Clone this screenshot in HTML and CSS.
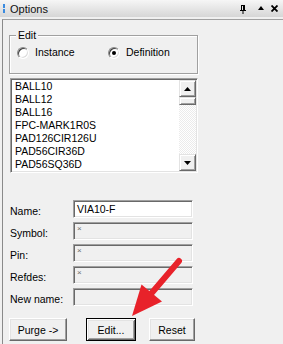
FILE: index.html
```html
<!DOCTYPE html>
<html>
<head>
<meta charset="utf-8">
<link rel="stylesheet" href="styles.css">
</head>
<body>
<div class="window">
  <div class="titlebar">
    <div class="grip"><span></span><span></span></div>
    <div class="title">Options</div>
    <div class="tools">
      <svg class="pin" width="6" height="9" viewBox="0 0 6 9"><path d="M1 0h4v5h1v1H3.5v3h-1V6H0V5h1z M2 1v4h1V1z" fill="#000" fill-rule="evenodd"/></svg>
      <svg class="up" width="6" height="4" viewBox="0 0 6 4"><path d="M3 0L6 4H0z" fill="#000"/></svg>
      <svg class="close" width="7" height="7" viewBox="0 0 7 7"><path d="M0.5 0.5l6 6M6.5 0.5l-6 6" stroke="#000" stroke-width="1.8"/></svg>
    </div>
  </div>
  <div class="panel">
    <div class="group">
      <span class="legend">Edit</span>
      <div class="radios">
        <label class="radio"><span class="rb"></span>Instance</label>
        <label class="radio"><span class="rb on"></span>Definition</label>
      </div>
    </div>
    <div class="listbox">
      <ul class="items">
        <li>BALL10</li>
        <li>BALL12</li>
        <li>BALL16</li>
        <li>FPC-MARK1R0S</li>
        <li>PAD126CIR126U</li>
        <li>PAD56CIR36D</li>
        <li>PAD56SQ36D</li>
      </ul>
      <div class="vscroll">
        <div class="sbtn"><svg width="7" height="4" viewBox="0 0 7 4"><path d="M3.5 0L7 4H0z" fill="#000"/></svg></div>
        <div class="thumb"></div>
        <div class="track"></div>
        <div class="sbtn"><svg width="7" height="4" viewBox="0 0 7 4"><path d="M0 0h7L3.5 4z" fill="#000"/></svg></div>
      </div>
    </div>
    <div class="form">
      <div class="row"><span class="lbl">Name:</span><div class="field">VIA10-F</div></div>
      <div class="row"><span class="lbl">Symbol:</span><div class="field dis"><span class="ast">×</span></div></div>
      <div class="row"><span class="lbl">Pin:</span><div class="field dis"><span class="ast">×</span></div></div>
      <div class="row"><span class="lbl">Refdes:</span><div class="field dis"><span class="ast">×</span></div></div>
      <div class="row"><span class="lbl">New name:</span><div class="field dis"></div></div>
    </div>
    <div class="buttons">
      <div class="btn purge">Purge -&gt;</div>
      <div class="btn edit def">Edit...</div>
      <div class="btn reset">Reset</div>
    </div>
  </div>
  <svg class="arrow" width="283" height="344" viewBox="0 0 283 344">
    <line x1="179" y1="261" x2="150" y2="295" stroke="#e8222a" stroke-width="6" stroke-linecap="round"/>
    <polygon points="132,316 141.5,284.5 162,301.5" fill="#e8222a"/>
  </svg>
</div>
</body>
</html>
```
FILE: styles.css
```css
* { box-sizing: border-box; }
html, body { margin: 0; padding: 0; background: #f0f0f0; }
body { font-family: "Liberation Sans", Arial, sans-serif; font-size: 10.5px; color: #000; }
.window { position: relative; width: 283px; height: 344px; overflow: hidden; background: #f0f0f0; }

.titlebar { height: 17px; display: flex; align-items: center; background: linear-gradient(#f6f6f6, #d6d6d6); }
.grip { width: 2px; margin-left: 3px; display: flex; flex-direction: column; gap: 1px; }
.grip span { display: block; width: 2px; height: 4px; background: #3a8be0; }
.title { margin-left: 5px; font-size: 11px; color: #111; }
.tools { margin-left: auto; display: flex; align-items: center; margin-right: 5px; }
.tools svg { display: block; }
.pin { margin-top: 2px; }
.up { margin-left: 12px; margin-top: -2px; }
.close { margin-left: 7px; }

.panel { margin-top: 2px; margin-left: 2px; border-top: 1px solid #a0a0a0; border-left: 1px solid #8a8a8a; height: 325px; }

.group { position: relative; margin: 15px 0 0 6px; width: 189px; height: 39px; border: 1px solid #a0a0a0; box-shadow: 1px 1px 0 #fff, inset 1px 1px 0 #fff; }
.legend { position: absolute; top: -7px; left: 6px; padding: 0 2px; background: #f0f0f0; line-height: 13px; }
.radios { display: flex; padding: 10px 0 0 7px; }
.radio { display: flex; align-items: center; line-height: 13px; }
.radio:first-child { width: 91px; }
.rb { width: 12px; height: 12px; border-radius: 50%; margin-right: 6px; background: #fff; position: relative;
  border: 1px solid; border-color: #8a8a8a #fff #fff #8a8a8a; box-shadow: inset 1px 1px 0 #404040, inset -1px -1px 0 #dcdcdc; }
.rb.on::after { content: ""; position: absolute; left: 3px; top: 3px; width: 4px; height: 4px; border-radius: 50%; background: #000; }

.listbox { display: flex; margin: 4px 0 0 7px; width: 188px; height: 95px; background: #fff;
  border: 1px solid; border-color: #a0a0a0 #fff #fff #a0a0a0; box-shadow: inset 1px 1px 0 #696969, inset -1px -1px 0 #e3e3e3; padding: 1px; }
.items { list-style: none; margin: 0; padding: 0 0 0 3px; flex: 1; line-height: 13px; overflow: hidden; }
.items li { height: 13px; }
.vscroll { width: 17px; display: flex; flex-direction: column; }
.sbtn, .thumb { background: #f0f0f0; border: 1px solid; border-color: #e3e3e3 #696969 #696969 #e3e3e3; box-shadow: inset 1px 1px 0 #fff, inset -1px -1px 0 #a0a0a0; }
.sbtn { height: 17px; display: flex; align-items: center; justify-content: center; }
.sbtn svg { display: block; }
.thumb { height: 8px; }
.track { flex: 1; background: repeating-conic-gradient(#fff 0 25%, #ebebeb 0 50%) 0 0 / 2px 2px; }

.form { margin: 27px 0 0 7px; display: flex; flex-direction: column; gap: 4px; }
.row { display: flex; align-items: center; }
.lbl { width: 63px; padding-top: 3px; }
.field { width: 120px; height: 18px; padding: 2px 0 0 3px; line-height: 13px;
  border: 1px solid; border-color: #a0a0a0 #fff #fff #a0a0a0; box-shadow: inset 1px 1px 0 #696969, inset -1px -1px 0 #e3e3e3; background: #fff; }
.field.dis { background: #f0f0f0; }
.ast { font-size: 8px; color: #6d6d6d; line-height: 8px; display: block; }

.buttons { display: flex; margin: 12px 0 0 6px; }
.btn { height: 23px; display: flex; align-items: center; justify-content: center; background: #f0f0f0;
  border: 1px solid; border-color: #fff #696969 #696969 #fff; box-shadow: inset -1px -1px 0 #a0a0a0, inset 1px 1px 0 #e3e3e3; }
.btn.def { border-color: #000; box-shadow: inset 1px 1px 0 #fff, inset -1px -1px 0 #696969, inset 2px 2px 0 #e3e3e3, inset -2px -2px 0 #a0a0a0; }
.purge { width: 58px; }
.edit { width: 50px; margin-left: 19px; }
.reset { width: 46px; margin-left: 13px; }

.arrow { position: absolute; left: 0; top: 0; pointer-events: none; }
```
